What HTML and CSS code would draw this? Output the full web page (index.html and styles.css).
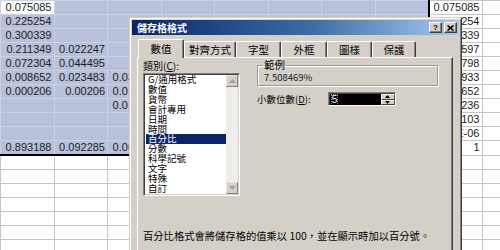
FILE: index.html
```html
<!DOCTYPE html>
<html lang="zh-Hant">
<head>
  <meta charset="UTF-8" />
  <title>儲存格格式</title>
  <link rel="stylesheet" href="styles.css">
</head>
<body>

<div class="sheet">
  <table class="grid">
    <colgroup>
      <col><col><col><col><col><col><col><col><col><col>
    </colgroup>
    <tr class="sel"><td class="active">0.075085</td><td></td><td></td><td></td><td></td><td></td><td></td><td></td><td>0.075085</td><td></td></tr>
    <tr class="sel"><td>0.225254</td><td></td><td></td><td></td><td></td><td></td><td></td><td></td><td>0.225254</td><td></td></tr>
    <tr class="sel"><td>0.300339</td><td></td><td></td><td></td><td></td><td></td><td></td><td></td><td>0.300339</td><td></td></tr>
    <tr class="sel"><td>0.211349</td><td>0.022247</td><td></td><td></td><td></td><td></td><td></td><td></td><td>0.233597</td><td></td></tr>
    <tr class="sel"><td>0.072304</td><td>0.044495</td><td></td><td></td><td></td><td></td><td></td><td></td><td>0.116798</td><td></td></tr>
    <tr class="sel"><td>0.008652</td><td>0.023483</td><td>0.038264</td><td></td><td></td><td></td><td></td><td></td><td>0.070933</td><td></td></tr>
    <tr class="sel"><td>0.000206</td><td>0.00206</td><td>0.012536</td><td></td><td></td><td></td><td></td><td></td><td>0.014652</td><td></td></tr>
    <tr class="sel"><td></td><td></td><td>0.015893</td><td></td><td></td><td></td><td></td><td></td><td>0.016236</td><td></td></tr>
    <tr class="sel"><td></td><td></td><td></td><td></td><td></td><td></td><td></td><td></td><td>0.000103</td><td></td></tr>
    <tr class="sel"><td></td><td></td><td></td><td></td><td></td><td></td><td></td><td></td><td>4.12E-06</td><td></td></tr>
    <tr class="sel end"><td>0.893188</td><td>0.092285</td><td>0.066693</td><td></td><td></td><td></td><td></td><td></td><td>1</td><td></td></tr>
    <tr><td></td><td></td><td></td><td></td><td></td><td></td><td></td><td></td><td></td><td></td></tr>
    <tr><td></td><td></td><td></td><td></td><td></td><td></td><td></td><td></td><td></td><td></td></tr>
    <tr><td></td><td></td><td></td><td></td><td></td><td></td><td></td><td></td><td></td><td></td></tr>
    <tr><td></td><td></td><td></td><td></td><td></td><td></td><td></td><td></td><td></td><td></td></tr>
    <tr><td></td><td></td><td></td><td></td><td></td><td></td><td></td><td></td><td></td><td></td></tr>
    <tr><td></td><td></td><td></td><td></td><td></td><td></td><td></td><td></td><td></td><td></td></tr>
    <tr><td></td><td></td><td></td><td></td><td></td><td></td><td></td><td></td><td></td><td></td></tr>
  </table>

  <div class="dialog">
    <div class="titlebar">
      <span class="title">儲存格格式</span>
      <div class="title-btns">
        <span class="tbtn">?</span>
        <span class="tbtn">
          <svg width="7" height="6" viewBox="0 0 7 6"><path d="M0.5 0.5 L6.5 5.5 M6.5 0.5 L0.5 5.5" stroke="#000" stroke-width="1.6"/></svg>
        </span>
      </div>
    </div>

    <div class="tabs">
      <div class="tab active" style="width:46px">數值</div>
      <div class="tab" style="width:52px">對齊方式</div>
      <div class="tab" style="width:45px">字型</div>
      <div class="tab" style="width:46px">外框</div>
      <div class="tab" style="width:45px">圖樣</div>
      <div class="tab" style="width:44px">保護</div>
    </div>

    <div class="pane">
      <div class="pane-top">
        <div class="left-col">
          <div class="label">類別(<u>C</u>):</div>
          <div class="listbox">
            <ul class="items">
              <li>G/通用格式</li>
              <li>數值</li>
              <li>貨幣</li>
              <li>會計專用</li>
              <li>日期</li>
              <li>時間</li>
              <li class="picked">百分比</li>
              <li>分數</li>
              <li>科學記號</li>
              <li>文字</li>
              <li>特殊</li>
              <li>自訂</li>
            </ul>
            <div class="scrollbar">
              <span class="sbtn">
                <svg width="7" height="4" viewBox="0 0 7 4"><polygon points="3.5,0 7,4 0,4" fill="#a0a0a0"/></svg>
              </span>
              <span class="track"></span>
              <span class="sbtn">
                <svg width="7" height="4" viewBox="0 0 7 4"><polygon points="0,0 7,0 3.5,4" fill="#a0a0a0"/></svg>
              </span>
            </div>
          </div>
        </div>

        <div class="right-col">
          <fieldset class="sample">
            <legend>範例</legend>
            <div class="sample-value">7.508469%</div>
          </fieldset>
          <div class="decimals">
            <span class="label">小數位數(<u>D</u>):</span>
            <div class="spin">
              <span class="spin-field"><span class="spin-text">5</span></span>
              <span class="spin-btns">
                <span class="sbtn small">
                  <svg width="5" height="3" viewBox="0 0 5 3"><polygon points="2.5,0 5,3 0,3" fill="#000"/></svg>
                </span>
                <span class="sbtn small">
                  <svg width="5" height="3" viewBox="0 0 5 3"><polygon points="0,0 5,0 2.5,3" fill="#000"/></svg>
                </span>
              </span>
            </div>
          </div>
        </div>
      </div>

      <p class="desc">百分比格式會將儲存格的值乘以 100，並在顯示時加以百分號。</p>
    </div>
  </div>
</div>

</body>
</html>
```

FILE: styles.css
```css
body {
  margin: 0;
  background: #fff;
  overflow: hidden;
}

.sheet {
  position: relative;
  width: 500px;
  height: 250px;
  overflow: hidden;
}

/* spreadsheet grid */
.grid {
  border-collapse: collapse;
  table-layout: fixed;
  width: 535px;
  font-family: "Liberation Sans", Arial, sans-serif;
  font-size: 11px;
  color: #1e1e1e;
}

.grid col {
  width: 53.5px;
}

.grid td {
  height: 13px;
  padding: 0 2px 0 0;
  line-height: 13px;
  border: 1px solid #c6c6c6;
  text-align: right;
  white-space: nowrap;
  overflow: hidden;
}

.grid tr.sel td:nth-child(-n+8) {
  background: #b8c0da;
  border-color: #cbd1e4;
}

.grid tr.sel td:nth-child(8) {
  border-right: 2px solid #000;
}

.grid tr.end td:nth-child(-n+8) {
  border-bottom: 2px solid #000;
}

.grid tr.sel td.active {
  background: #fff;
}

/* dialog window */
.dialog {
  position: absolute;
  left: 129px;
  top: 17px;
  width: 333px;
  height: 250px;
  box-sizing: border-box;
  padding: 2px;
  background: #d4d0c8;
  border: 1px solid;
  border-color: #d4d0c8 #404040 #404040 #d4d0c8;
  box-shadow: inset 1px 1px 0 #fff, inset -1px -1px 0 #808080;
  font-family: "Noto Sans CJK TC", "Liberation Sans", sans-serif;
  font-size: 10px;
  color: #000;
}

.titlebar {
  height: 15px;
  display: flex;
  align-items: center;
  justify-content: space-between;
  padding: 0 2px 0 5px;
  background: linear-gradient(to right, #0a246a, #3a6ea5 55%, #a6caf0);
}

.title {
  color: #fff;
  font-weight: bold;
  font-size: 10px;
  line-height: 15px;
}

.title-btns {
  display: flex;
  gap: 2px;
}

.tbtn {
  width: 13px;
  height: 11px;
  box-sizing: border-box;
  display: flex;
  align-items: center;
  justify-content: center;
  overflow: hidden;
  background: #d4d0c8;
  border: 1px solid;
  border-color: #fff #404040 #404040 #fff;
  box-shadow: inset -1px -1px 0 #808080;
  font-family: "Liberation Sans", sans-serif;
  font-weight: bold;
  font-size: 8px;
  line-height: 8px;
}

/* tabs */
.tabs {
  display: flex;
  align-items: flex-end;
  height: 18px;
  margin: 4px 0 0 6px;
}

.tab {
  height: 16px;
  box-sizing: border-box;
  text-align: center;
  font-size: 10.5px;
  line-height: 15px;
  border-top: 1px solid #fff;
  border-left: 1px solid #fff;
  border-right: 1px solid #404040;
  box-shadow: inset -1px 0 0 #808080;
  border-radius: 2px 2px 0 0;
}

.tab.active {
  height: 19px;
  margin-bottom: -1px;
  line-height: 17px;
  background: #d4d0c8;
  position: relative;
  z-index: 1;
}

.pane {
  height: 200px;
  margin: 0 6px 0 5px;
  padding: 2px 5px 0;
  border: 1px solid;
  border-color: #fff #404040 #404040 #fff;
  box-shadow: inset -1px -1px 0 #808080;
}

.pane-top {
  display: flex;
  gap: 17px;
}

.left-col {
  width: 97px;
}

.label {
  line-height: 11px;
}

.listbox {
  display: flex;
  height: 123px;
  margin-top: 2px;
  box-sizing: border-box;
  background: #fff;
  border: 1px solid;
  border-color: #808080 #fff #fff #808080;
  box-shadow: inset 1px 1px 0 #404040, inset -1px -1px 0 #d4d0c8;
  padding: 1px 1px 1px 2px;
}

.items {
  flex: 1;
  list-style: none;
  margin: 0;
  padding: 0;
  font-size: 9.5px;
  line-height: 9.9px;
  overflow: hidden;
}

.items li {
  padding-left: 2px;
  white-space: nowrap;
}

.items li.picked {
  background: #0a246a;
  color: #fff;
}

.scrollbar {
  width: 12px;
  display: flex;
  flex-direction: column;
}

.track {
  flex: 1;
  background: #eeedea;
}

.sbtn {
  height: 12px;
  box-sizing: border-box;
  display: flex;
  align-items: center;
  justify-content: center;
  background: #d4d0c8;
  border: 1px solid;
  border-color: #e8e6e2 #808080 #808080 #e8e6e2;
}

.right-col {
  width: 181px;
}

.sample {
  margin: 0;
  padding: 0 6px 3px;
  height: 26px;
  box-sizing: border-box;
  border: 1px solid #9a9891;
  box-shadow: inset 1px 1px 0 #fff, 1px 1px 0 #fff;
}

.sample legend {
  padding: 0 1px;
  margin-left: -1px;
  line-height: 10px;
  font-size: 10.5px;
}

.sample-value {
  line-height: 14px;
  font-size: 9.5px;
  color: #202020;
}

.decimals {
  display: flex;
  align-items: center;
  gap: 17px;
  margin-top: 6px;
}

.decimals .label {
  font-size: 9.5px;
}

.spin {
  display: flex;
  width: 68px;
  height: 14px;
  box-sizing: border-box;
  border: 1px solid;
  border-color: #808080 #fff #fff #808080;
  box-shadow: inset 1px 1px 0 #404040;
  padding: 1px 0 0 1px;
  background: #000;
}

.spin-field {
  flex: 1;
  display: flex;
  align-items: center;
  padding-left: 2px;
  overflow: hidden;
}

.spin-text {
  color: #fff;
  font-family: "Liberation Sans", sans-serif;
  font-size: 10px;
  line-height: 10px;
  outline: 1px dotted #888;
}

.spin-btns {
  width: 14px;
  display: flex;
  flex-direction: column;
}

.sbtn.small {
  height: 6px;
  border-color: #fff #404040 #404040 #fff;
}

.desc {
  margin: 34px 0 0;
  font-size: 10.3px;
  line-height: 11px;
  white-space: nowrap;
}
```
